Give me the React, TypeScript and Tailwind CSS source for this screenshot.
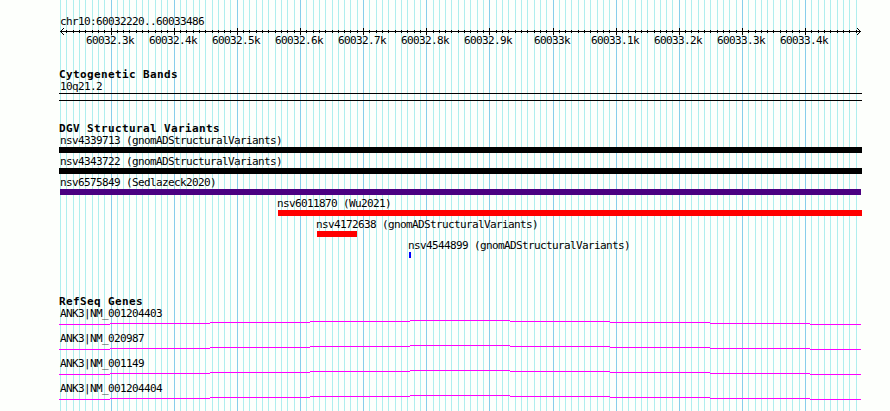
import React from "react";

const START = 60032220;
const END = 60033486;
const PAD_LEFT = 60;
const TRACK_WIDTH = 800;

const toX = (bp: number) =>
  PAD_LEFT + Math.round(((bp - START) * TRACK_WIDTH) / (END - START + 1));

interface Variant {
  name: string;
  left: number;
  width: number;
  color: string;
}

const variants: Variant[] = [
  { name: "nsv4339713 (gnomADStructuralVariants)", left: 59, width: 803, color: "bg-black" },
  { name: "nsv4343722 (gnomADStructuralVariants)", left: 59, width: 803, color: "bg-black" },
  { name: "nsv6575849 (Sedlazeck2020)", left: 60, width: 801, color: "bg-[#4b0082]" },
  { name: "nsv6011870 (Wu2021)", left: 278, width: 584, color: "bg-[#ff0000]" },
  { name: "nsv4172638 (gnomADStructuralVariants)", left: 317, width: 40, color: "bg-[#ff0000]" },
  { name: "nsv4544899 (gnomADStructuralVariants)", left: 409, width: 2, color: "bg-[#0000ff]" },
];

const genes = ["NM_001204403", "NM_020987", "NM_001149", "NM_001204404"];

// x, y, width of every step of an intron line
const intronSteps = [
  [59, 4, 51],
  [110, 3, 100],
  [210, 2, 100],
  [310, 1, 100],
  [410, 0, 100],
  [510, 1, 100],
  [610, 2, 100],
  [710, 3, 100],
  [810, 4, 51],
];

const ticks: number[] = [];
for (let bp = START; bp <= END; bp += 10) ticks.push(bp);
const isMajor = (bp: number) => bp % 100 === 0;

const Label: React.FC<{ children: React.ReactNode }> = ({ children }) => (
  <span className="-ml-px block h-3 whitespace-pre font-['DejaVu_Sans_Mono',monospace] text-[11px] leading-[14px] tracking-[-0.623px]">
    {children}
  </span>
);

const Heading: React.FC<{ children: React.ReactNode }> = ({ children }) => (
  <h2 className="ml-[59px] h-3 whitespace-pre font-['DejaVu_Sans_Mono',monospace] text-[11px] leading-[14px] font-bold tracking-[0.377px]">
    {children}
  </h2>
);

/* Vertical guide lines behind all tracks */
const Grid = () => (
  <svg className="absolute inset-0" width="890" height="411" shapeRendering="crispEdges">
    {ticks.map((bp) => (
      <rect key={bp} x={toX(bp)} y="0" width="1" height="411" fill={isMajor(bp) ? "#87ceeb" : "#afeeee"} />
    ))}
  </svg>
);

const Ruler = () => (
  <div className="h-[52px]">
    <div className="ml-[61px] pt-[15px]">
      <Label>chr10:60032220..60033486</Label>
    </div>
    <svg className="block" width="890" height="8" shapeRendering="crispEdges">
      <rect x="60" y="4" width="801" height="1" />
      {ticks.slice(1).map((bp) => (
        <rect key={bp} x={toX(bp)} y={isMajor(bp) ? 1 : 3} width="1" height={isMajor(bp) ? 7 : 3} />
      ))}
      <path d="M61 3h1v3h-1zM62 2h1v1h-1zM62 6h1v1h-1zM63 1h1v1h-1zM63 7h1v1h-1z" />
      <path d="M859 3h1v3h-1zM858 2h1v1h-1zM858 6h1v1h-1zM857 1h1v1h-1zM857 7h1v1h-1z" />
    </svg>
    <div className="relative -mt-px h-3">
      {ticks.filter(isMajor).map((bp) => (
        <div key={bp} className="absolute top-0" style={{ left: toX(bp) - String(bp / 1000).length * 3 - 3 }}>
          <Label>{bp / 1000}k</Label>
        </div>
      ))}
    </div>
  </div>
);

const App = () => (
  <main className="relative h-[411px] w-[890px] overflow-hidden bg-[#fdfffc] text-black">
    <Grid />
    <div className="relative flex flex-col">
      <Ruler />

      <section className="mt-4 h-[54px]">
        <Heading>Cytogenetic Bands</Heading>
        <div className="ml-[61px]">
          <Label>10q21.2</Label>
        </div>
        <div className="mt-px ml-[59px] h-2 w-[803px] border-y border-black" />
      </section>

      <section className="h-[173px]">
        <Heading>DGV Structural Variants</Heading>
        {variants.map((v) => (
          <div key={v.name} className="h-[21px]" style={{ marginLeft: v.left }}>
            <div style={{ marginLeft: v.left < 61 ? 61 - v.left : 0 }}>
              <Label>{v.name}</Label>
            </div>
            <div className={`mt-px h-1.5 ${v.color}`} style={{ width: v.width }} />
          </div>
        ))}
      </section>

      <section>
        <Heading>RefSeq Genes</Heading>
        {genes.map((gene) => (
          <div key={gene} className="h-[25px]">
            <div className="ml-[61px]">
              <Label>ANK3|{gene}</Label>
            </div>
            <svg className="mt-px block" width="890" height="6" shapeRendering="crispEdges">
              {intronSteps.map(([x, y, width]) => (
                <rect key={x} x={x} y={y} width={width} height="1" fill="#ff00ff" />
              ))}
            </svg>
          </div>
        ))}
      </section>
    </div>
  </main>
);

export default App;
